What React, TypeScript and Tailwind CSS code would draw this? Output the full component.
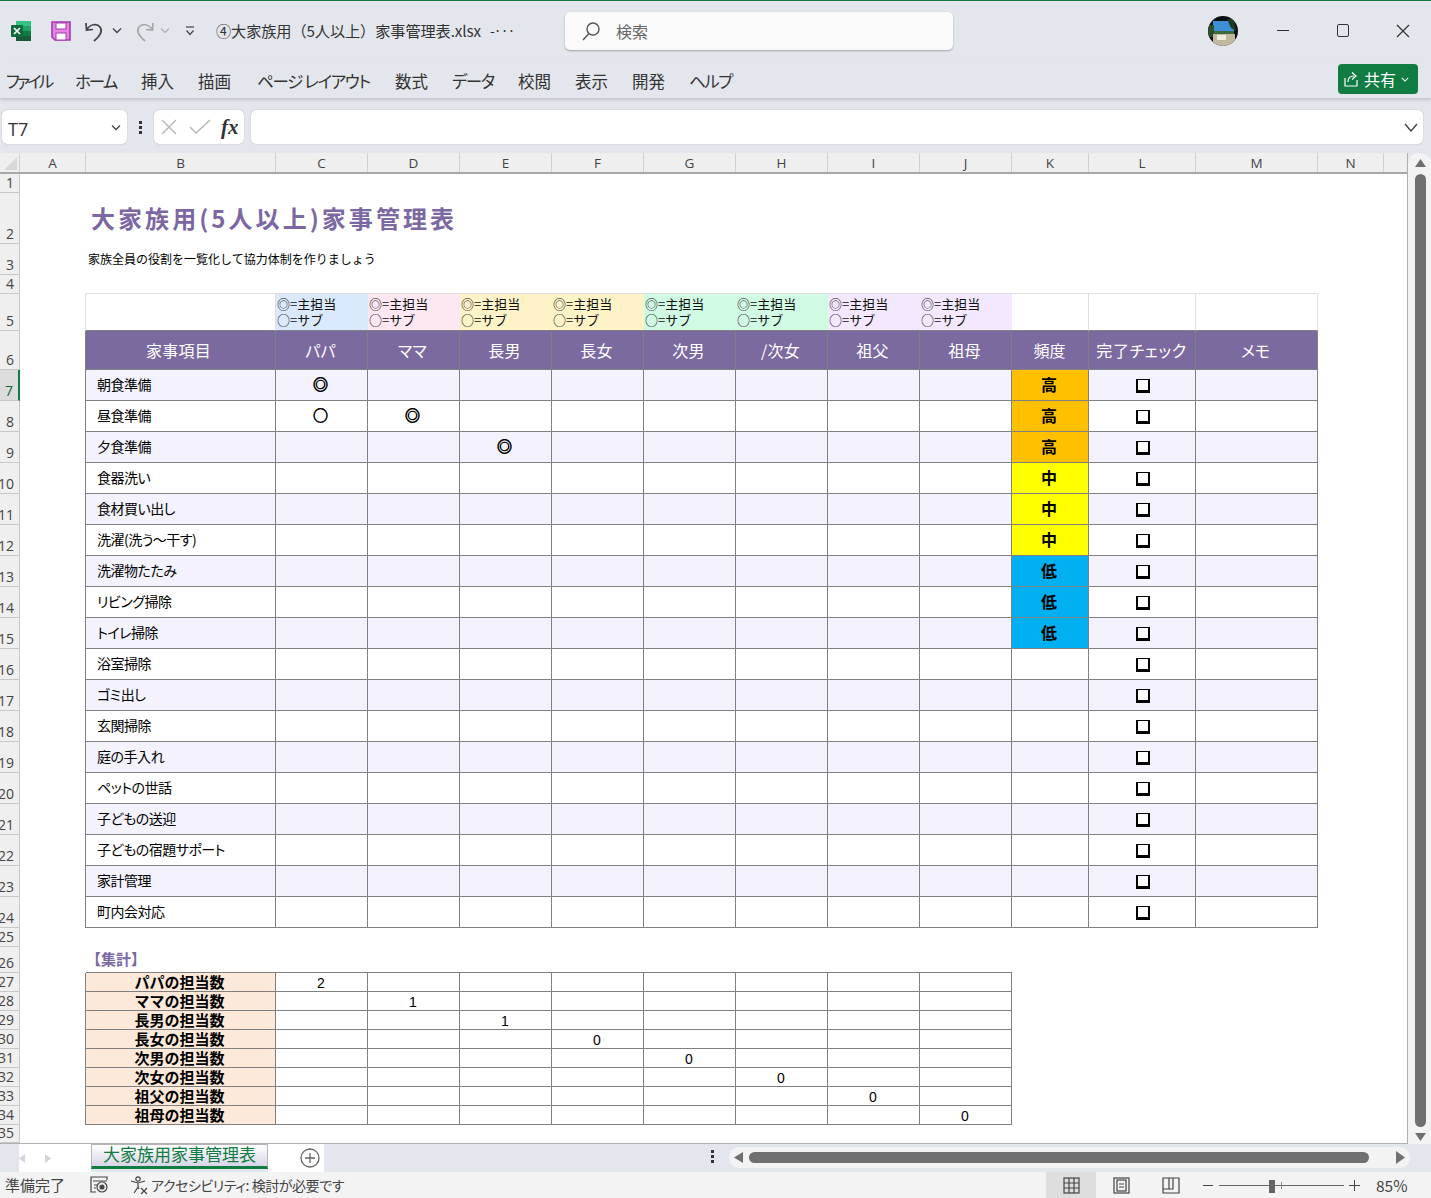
import React from "react";

const BORDER = "border-[#808080]";
const dataWidths = ["w-[92px]", "w-[92px]", "w-[92px]", "w-[92px]", "w-[92px]", "w-[92px]", "w-[92px]", "w-[92px]"];
const legendBg = ["bg-[#dbe9fd]", "bg-[#fce7f3]", "bg-[#fef3c7]", "bg-[#fef3c7]", "bg-[#d1fae5]", "bg-[#d1fae5]", "bg-[#f3e8ff]", "bg-[#f3e8ff]"];
const people = ["パパ", "ママ", "長男", "長女", "次男", "/次女", "祖父", "祖母"];
const chores = ["朝食準備", "昼食準備", "夕食準備", "食器洗い", "食材買い出し", "洗濯(洗う〜干す)", "洗濯物たたみ", "リビング掃除", "トイレ掃除", "浴室掃除", "ゴミ出し", "玄関掃除", "庭の手入れ", "ペットの世話", "子どもの送迎", "子どもの宿題サポート", "家計管理", "町内会対応"];
const marks: Record<string, string> = { "0-0": "◎", "1-0": "○", "1-1": "◎", "2-2": "◎" };
const freq = ["高", "高", "高", "中", "中", "中", "低", "低", "低"];
const freqBg = ["bg-[#ffc000]", "bg-[#ffc000]", "bg-[#ffc000]", "bg-[#ffff00]", "bg-[#ffff00]", "bg-[#ffff00]", "bg-[#00b0f0]", "bg-[#00b0f0]", "bg-[#00b0f0]"];
const summary = ["パパの担当数", "ママの担当数", "長男の担当数", "長女の担当数", "次男の担当数", "次女の担当数", "祖父の担当数", "祖母の担当数"];
const counts = ["2", "1", "1", "0", "0", "0", "0", "0"];
const columnHeads = [
  { l: "A", w: "w-[66px]" }, { l: "B", w: "w-[190px]" }, { l: "C", w: "w-[92px]" }, { l: "D", w: "w-[92px]" },
  { l: "E", w: "w-[92px]" }, { l: "F", w: "w-[92px]" }, { l: "G", w: "w-[92px]" }, { l: "H", w: "w-[92px]" },
  { l: "I", w: "w-[92px]" }, { l: "J", w: "w-[92px]" }, { l: "K", w: "w-[77px]" }, { l: "L", w: "w-[107px]" },
  { l: "M", w: "w-[122px]" }, { l: "N", w: "w-[66px]" },
];
const menu = [
  { t: "ファイル", w: "w-[46px] tracking-[-3px]" }, { t: "ホーム", w: "w-[43px] tracking-[-2px]" }, { t: "挿入", w: "w-[34px]" }, { t: "描画", w: "w-[36px]" },
  { t: "ページ レイアウト", w: "w-[115px] tracking-[-1.3px]" }, { t: "数式", w: "w-[34px]" }, { t: "データ", w: "w-[43px] tracking-[-1.5px]" }, { t: "校閲", w: "w-[34px]" },
  { t: "表示", w: "w-[34px]" }, { t: "開発", w: "w-[34px]" }, { t: "ヘルプ", w: "w-[43px] tracking-[-1.5px]" },
];

function Row({ n, h, sel, children }: { n: number; h: string; sel?: boolean; children?: React.ReactNode }) {
  return (
    <div className={`flex ${h}`}>
      <div className={sel
        ? "w-[20px] shrink-0 flex items-end justify-end pr-[5px] bg-[#dcdcdc] border-r-2 border-r-[#107c41] border-b border-b-[#c8c8c8] text-[14px] leading-[18px] text-[#0f6b39] font-['Open_Sans',sans-serif]"
        : "w-[20px] shrink-0 flex items-end justify-end pr-[5px] bg-[#efefef] border-r border-b border-[#c8c8c8] text-[14px] leading-[18px] text-[#444444] font-['Open_Sans',sans-serif]"}>
        {n}
      </div>
      {children}
    </div>
  );
}

function Cell({ className, children }: { className: string; children?: React.ReactNode }) {
  return <div className={`shrink-0 h-full flex items-center justify-center border-r border-b ${BORDER} ${className}`}>{children}</div>;
}

function ChoreRow({ i }: { i: number }) {
  const stripe = i % 2 === 0 ? "bg-[#f3f2fd]" : "bg-white";
  return (
    <Row n={7 + i} h="h-[31px]" sel={i === 0}>
      <div className={`w-[66px] shrink-0 border-r ${BORDER}`} />
      <Cell className={`w-[190px] !justify-start pl-[11px] pb-[1px] text-[14px] tracking-[-0.5px] text-black ${stripe}`}>{chores[i]}</Cell>
      {dataWidths.map((w, c) => (
        <Cell key={c} className={`${w} ${stripe} pr-[2px] pb-[1px] text-[15px] font-bold text-black [-webkit-text-stroke:0.6px_black]`}>{marks[`${i}-${c}`]}</Cell>
      ))}
      <Cell className={`w-[77px] pr-[2px] pb-[2px] text-[16px] font-bold text-black ${freqBg[i] ?? stripe}`}>{freq[i]}</Cell>
      <Cell className={`w-[107px] pl-[1px] ${stripe}`}>
        <span className="block w-[14px] h-[14px] mt-[1px] border-2 border-t-[1.5px] border-b-[3px] border-black bg-white" />
      </Cell>
      <Cell className={`w-[122px] ${stripe}`} />
    </Row>
  );
}

function Excel() {
  return (
    <svg width="22" height="22" viewBox="0 0 22 22">
      <rect x="6" y="1" width="15" height="5" fill="#33c481" />
      <rect x="6" y="6" width="15" height="5" fill="#21a366" />
      <rect x="6" y="11" width="15" height="5" fill="#107c41" />
      <rect x="6" y="16" width="15" height="5" fill="#185c37" />
      <rect x="1" y="5" width="12" height="12" rx="1" fill="#0f6b39" />
      <path d="M4 8 L10 14 M10 8 L4 14" stroke="#fff" strokeWidth="1.6" />
    </svg>
  );
}

function Save() {
  return (
    <svg width="20" height="20" viewBox="0 0 20 20">
      <path d="M1 1 H19 V19 H4 L1 16 Z" fill="#e884df" stroke="#a23ab0" strokeWidth="1.6" />
      <rect x="5" y="2" width="10" height="6" fill="#fff" stroke="#a23ab0" />
      <rect x="5" y="12" width="10" height="7" fill="#fff" stroke="#a23ab0" />
    </svg>
  );
}

function Chevron({ className, color = "#444444" }: { className?: string; color?: string }) {
  return (
    <svg width="10" height="7" viewBox="0 0 10 7" className={className}>
      <path d="M1 1.5 L5 5.5 L9 1.5" fill="none" stroke={color} strokeWidth="1.3" />
    </svg>
  );
}

function App() {
  return (
    <div className="relative w-[1431px] h-[1198px] overflow-hidden bg-[#e3e6ec] font-['Noto_Sans_CJK_JP',sans-serif] [font-feature-settings:'palt'] text-[#333333]">
      <div className="h-px bg-[#107c41]" />

      {/* title bar */}
      <div className="h-[59px] flex items-center relative">
        <div className="ml-[10px] w-[22px] mt-[1px]"><Excel /></div>
        <div className="ml-[19px] mt-[1px]"><Save /></div>
        <svg width="22" height="22" viewBox="0 0 22 22" className="ml-[13px]" fill="none" stroke="#444444" strokeWidth="1.7">
          <path d="M2 3 L2.5 10 L9 9.5" />
          <path d="M2.5 10 C6 4 13 3 16 7 C19 11 16 16 10 21" />
        </svg>
        <Chevron className="ml-[6px]" />
        <svg width="22" height="22" viewBox="0 0 22 22" className="ml-[11px]" fill="none" stroke="#a8a8a8" strokeWidth="1.7">
          <path d="M20 3 L19.5 10 L13 9.5" />
          <path d="M19.5 10 C16 4 9 3 6 7 C3 11 6 16 12 21" />
        </svg>
        <Chevron className="ml-[5px]" color="#b4b4b4" />
        <svg width="10" height="10" viewBox="0 0 10 10" className="ml-[15px]" fill="none" stroke="#444444" strokeWidth="1.2">
          <path d="M1 1 H9" />
          <path d="M1.5 4.5 L5 8.5 L8.5 4.5" />
        </svg>
        <span className="ml-[21px] w-[268px] whitespace-nowrap text-[15.2px] tracking-[-0.1px] text-[#333333] [font-feature-settings:normal]">④大家族用（5人以上）家事管理表.xlsx</span>
        <span className="ml-[6px] w-[26px] text-[14px] text-[#333333] whitespace-nowrap tracking-[-1px]">-···</span>
        <div className="ml-[49px] w-[388px] h-[38px] mt-[1px] rounded-[5px] bg-[#fafafa] shadow-[0_1px_2px_rgba(0,0,0,0.3)] flex items-center pl-[16px]">
          <svg width="20" height="20" viewBox="0 0 20 20" fill="none" stroke="#555555" strokeWidth="1.4">
            <circle cx="12" cy="8" r="6" />
            <path d="M8 12.5 L2 19" />
          </svg>
          <span className="ml-[15px] text-[16px] text-[#666666]">検索</span>
        </div>
        <svg width="30" height="30" viewBox="0 0 30 30" className="ml-[255px]">
          <defs><clipPath id="av"><circle cx="15" cy="15" r="15" /></clipPath></defs>
          <g clipPath="url(#av)">
            <rect width="30" height="30" fill="#0a0f14" />
            <rect x="5" y="5" width="21" height="12" fill="#3f8fd8" />
            <rect x="5" y="15" width="21" height="3" fill="#3d6a3a" />
            <rect x="0" y="9" width="6" height="12" fill="#2f4d2c" />
            <rect x="5" y="18" width="22" height="12" fill="#c2b89e" />
            <rect x="9" y="19" width="9" height="5" fill="#efebdf" />
            <path d="M19 3 L26 3 L28 15 L23 12 Z" fill="#1c3a24" />
          </g>
        </svg>
        <span className="ml-[39px] w-[12px] h-[1.5px] bg-[#333333]" />
        <span className="ml-[48px] w-[12px] h-[13px] rounded-[2px] border-[1.3px] border-[#333333]" />
        <svg width="14" height="14" viewBox="0 0 14 14" className="ml-[47px]" stroke="#333333" strokeWidth="1.2">
          <path d="M1 1 L13 13 M13 1 L1 13" />
        </svg>
      </div>

      {/* menu */}
      <div className="h-[38px] flex items-center pl-[6px] gap-[23px] shadow-[0_2px_3px_rgba(0,0,0,0.15)] relative">
        {menu.map((m) => (
          <span key={m.t} className={`${m.w} mt-[3px] shrink-0 whitespace-nowrap text-[16.5px] leading-[20px] text-[#333333]`}>{m.t}</span>
        ))}
        <div className="ml-auto mr-[13px] w-[80px] h-[30px] rounded-[4px] bg-[#107c41] flex items-center pl-[6px] text-white">
          <svg width="15" height="16" viewBox="0 0 15 16" fill="none" stroke="#ffffff" strokeWidth="1.2">
            <path d="M1 7 V15 H13 V9" />
            <path d="M4 11 C4 7 6 5 10 5 M8 1.5 L12 5 L8 8.5" />
          </svg>
          <span className="ml-[5px] text-[16px] leading-[20px]">共有</span>
          <Chevron className="ml-[5px] w-[8px]" color="#ffffff" />
        </div>
      </div>

      {/* formula bar */}
      <div className="h-[55px] flex items-start pt-[12px] pl-[2px]">
        <div className="w-[125px] h-[34px] rounded-[5px] bg-white shadow-[0_0_1px_rgba(0,0,0,0.4)] flex items-center justify-between pl-[6px] pr-[6px]">
          <span className="mt-[3px] text-[18px] leading-[20px] text-[#333333] font-['Open_Sans',sans-serif]">T7</span>
          <Chevron />
        </div>
        <div className="w-[27px] h-[34px] flex flex-col items-center justify-center gap-[2px]">
          <span className="w-[3px] h-[3px] bg-[#333333]" />
          <span className="w-[3px] h-[3px] bg-[#333333]" />
          <span className="w-[3px] h-[3px] bg-[#333333]" />
        </div>
        <div className="w-[90px] h-[34px] rounded-[5px] bg-white shadow-[0_0_1px_rgba(0,0,0,0.4)] flex items-center pl-[7px]">
          <svg width="16" height="16" viewBox="0 0 16 16" stroke="#b4b4b4" strokeWidth="1.4"><path d="M1 1 L15 15 M15 1 L1 15" /></svg>
          <svg width="22" height="16" viewBox="0 0 22 16" fill="none" stroke="#b4b4b4" strokeWidth="1.4" className="ml-[12px]"><path d="M1 8 L7 14 L21 1" /></svg>
          <span className="ml-[10px] text-[21px] leading-[20px] italic font-bold text-[#333333] font-['Liberation_Serif',serif]">fx</span>
        </div>
        <div className="ml-[7px] w-[1172px] h-[34px] rounded-[5px] bg-white shadow-[0_0_1px_rgba(0,0,0,0.4)] flex items-center justify-end pr-[5px]">
          <svg width="14" height="9" viewBox="0 0 14 9" fill="none" stroke="#444444" strokeWidth="1.4"><path d="M1 1 L7 8 L13 1" /></svg>
        </div>
      </div>

      {/* sheet */}
      <div className="flex h-[991px]">
        <div className="w-[1408px] shrink-0 bg-white border-r border-b border-[#b0b0b0]">
          <div className="flex h-[21px] bg-[#efefef] border-b-2 border-[#a8a8a8]">
            <div className="w-[20px] shrink-0 flex items-end justify-end pr-[2px] pb-[2px] border-r border-[#d0d0d0]">
              <svg width="13" height="13" viewBox="0 0 13 13"><path d="M13 0 V13 H0 Z" fill="#d8d8d8" /></svg>
            </div>
            {columnHeads.map((c) => (
              <div key={c.l} className={`${c.w} shrink-0 border-r border-[#d0d0d0] text-center text-[13.5px] leading-[20px] text-[#444444] font-['Open_Sans',sans-serif]`}>{c.l}</div>
            ))}
          </div>

          <Row n={1} h="h-[19px]" />
          <Row n={2} h="h-[51px]">
            <div className="pl-[71px] pb-[2px] flex items-center whitespace-nowrap text-[24px] font-bold tracking-[3.05px] text-[#7b68a3]">大家族用(5人以上)家事管理表</div>
          </Row>
          <Row n={3} h="h-[31px]">
            <div className="pl-[68px] pb-[2px] flex items-center whitespace-nowrap text-[12px] text-black [font-feature-settings:normal]">家族全員の役割を一覧化して協力体制を作りましょう</div>
          </Row>
          <Row n={4} h="h-[19px]">
            <div className="w-[65px] shrink-0" />
            <div className="w-[1233px] shrink-0 border-b border-[#e0e0e0] h-full" />
          </Row>
          <Row n={5} h="h-[37px]">
            <div className="w-[66px] shrink-0 border-r border-[#e0e0e0]" />
            <div className="w-[190px] shrink-0 border-r border-r-[#e0e0e0] border-b border-b-[#808080]" />
            {legendBg.map((bg, i) => (
              <div key={i} className={`w-[92px] shrink-0 pl-[1px] pt-[2px] border-b border-b-[#808080] ${bg} text-[13px] leading-[15.5px] whitespace-nowrap text-[#111111] [font-feature-settings:normal]`}>
                <div>◎=主担当</div>
                <div>○=サブ</div>
              </div>
            ))}
            <div className="w-[77px] shrink-0 border-r border-r-[#e0e0e0] border-b border-b-[#808080]" />
            <div className="w-[107px] shrink-0 border-r border-r-[#e0e0e0] border-b border-b-[#808080]" />
            <div className="w-[122px] shrink-0 border-r border-r-[#e0e0e0] border-b border-b-[#808080]" />
          </Row>
          <Row n={6} h="h-[39px]">
            <div className={`w-[66px] shrink-0 border-r ${BORDER}`} />
            <Cell className="w-[190px] bg-[#7b6aa0] text-[16px] tracking-[0.3px] text-white pr-[4px]">家事項目</Cell>
            {people.map((p, i) => (
              <Cell key={i} className={`${dataWidths[i]} bg-[#7b6aa0] text-[16px] tracking-[0.3px] text-white pr-[2px]`}>{p}</Cell>
            ))}
            <Cell className="w-[77px] bg-[#7b6aa0] text-[16px] text-white pr-[1px]">頻度</Cell>
            <Cell className="w-[107px] bg-[#7b6aa0] text-[16px] tracking-[0.6px] text-white whitespace-nowrap pr-[1px]">完了チェック</Cell>
            <Cell className="w-[122px] bg-[#7b6aa0] text-[16px] text-white pr-[2px]">メモ</Cell>
          </Row>
          {chores.map((_, i) => <ChoreRow key={i} i={i} />)}
          <Row n={25} h="h-[19px]" />
          <Row n={26} h="h-[26px]">
            <div className="w-[66px] shrink-0" />
            <div className={`w-[190px] shrink-0 h-full border-b ${BORDER} flex items-center whitespace-nowrap text-[15px] font-bold text-[#7b68a3] [font-feature-settings:normal]`}>【集計】</div>
            <div className={`w-[736px] shrink-0 h-full border-b ${BORDER}`} />
          </Row>
          {summary.map((s, i) => (
            <Row key={s} n={27 + i} h="h-[19px]">
              <div className={`w-[66px] shrink-0 border-r ${BORDER}`} />
              <Cell className="w-[190px] bg-[#fde9d9] pr-[2px] text-[15px] leading-[18px] font-bold text-black whitespace-nowrap [font-feature-settings:normal]">{s}</Cell>
              {dataWidths.map((w, c) => (
                <Cell key={c} className={`${w} text-[14px] leading-[18px] pt-[1px] pr-[1px] text-black font-['Liberation_Sans',sans-serif]`}>{c === i ? counts[i] : ""}</Cell>
              ))}
            </Row>
          ))}
          <Row n={35} h="h-[18px]" />
        </div>

        {/* vertical scrollbar */}
        <div className="w-[23px] shrink-0 bg-[#f3f3f3] rounded-t-[10px] flex flex-col items-center pt-[6px] pb-[3px] pl-[1px]">
          <svg width="11" height="8" viewBox="0 0 11 8"><path d="M5.5 0 L11 8 H0 Z" fill="#707070" /></svg>
          <div className="w-[11px] flex-1 mt-[7px] mb-[6px] rounded-[6px] bg-[#707070]" />
          <svg width="11" height="8" viewBox="0 0 11 8"><path d="M5.5 8 L11 0 H0 Z" fill="#707070" /></svg>
        </div>
      </div>

      {/* tabs */}
      <div className="h-[28px] flex">
        <div className="w-[19px] shrink-0" />
        <div className="w-[72px] h-full bg-white flex items-center">
          <svg width="6" height="9" viewBox="0 0 6 9"><path d="M6 0 V9 L0 4.5 Z" fill="#d4d4d4" /></svg>
          <svg width="6" height="9" viewBox="0 0 6 9" className="ml-[20px]"><path d="M0 0 V9 L6 4.5 Z" fill="#d4d4d4" /></svg>
        </div>
        <div className="w-[177px] h-[25px] shrink-0 border-x border-t border-[#b4b4b4] border-b-[3px] border-b-[#107c41] bg-gradient-to-b from-white to-[#d8d6e8] text-center text-[17px] leading-[18px] text-[#107c41] whitespace-nowrap [font-feature-settings:normal]">大家族用家事管理表</div>
        <div className="w-[56px] h-full bg-white flex items-center justify-center pl-[28px]">
          <svg width="20" height="20" viewBox="0 0 20 20" fill="none" stroke="#666666" strokeWidth="1.3">
            <circle cx="10" cy="10" r="9" />
            <path d="M5 10 H15 M10 5 V15" />
          </svg>
        </div>
        <div className="ml-[387px] w-[3px] flex flex-col items-center justify-center gap-[2px] h-[24px]">
          <span className="w-[3px] h-[3px] bg-[#333333]" />
          <span className="w-[3px] h-[3px] bg-[#333333]" />
          <span className="w-[3px] h-[3px] bg-[#333333]" />
        </div>
        <div className="ml-[15px] mt-[3px] w-[681px] h-[21px] rounded-[10px] bg-[#f3f3f3] flex items-center pl-[5px] pr-[4px]">
          <svg width="9" height="11" viewBox="0 0 9 11" className="shrink-0"><path d="M9 0 V11 L0 5.5 Z" fill="#707070" /></svg>
          <div className="ml-[6px] w-[620px] h-[11px] rounded-[6px] bg-[#707070]" />
          <svg width="9" height="13" viewBox="0 0 9 13" className="ml-[27px] shrink-0"><path d="M0 0 V13 L9 6.5 Z" fill="#707070" /></svg>
        </div>
      </div>

      {/* status bar */}
      <div className="h-[26px] bg-[#f3f3f3] flex items-center pl-[5px] text-[#444444]">
        <span className="w-[60px] text-[15px] leading-[20px] whitespace-nowrap [font-feature-settings:normal]">準備完了</span>
        <svg width="20" height="18" viewBox="0 0 20 18" className="ml-[24px]" fill="none" stroke="#444444" strokeWidth="1.2">
          <path d="M18 4 V1 H2 V16 H7" />
          <path d="M4 5 H18 M5 9 H8 M5 12 H7" />
          <circle cx="13" cy="11" r="5" />
          <circle cx="13" cy="11" r="2" fill="#444444" />
        </svg>
        <svg width="20" height="20" viewBox="0 0 20 20" className="ml-[20px]" fill="none" stroke="#444444" strokeWidth="1.2">
          <circle cx="9" cy="4" r="2.2" />
          <path d="M2 6 L9 8 L16 6 M9 8 V12 L5 18 M9 12 L10 14" />
          <path d="M12 13 L18 19 M18 13 L12 19" />
        </svg>
        <span className="ml-[2px] text-[14px] leading-[20px] whitespace-nowrap tracking-[-0.45px]">アクセシビリティ: 検討が必要です</span>
        <div className="ml-auto flex items-center h-full">
          <div className="w-[50px] h-full bg-[#dedede] flex items-center justify-center">
            <svg width="17" height="17" viewBox="0 0 17 17" fill="none" stroke="#444444" strokeWidth="1.2">
              <rect x="1" y="1" width="15" height="15" />
              <path d="M6 1 V16 M11 1 V16 M1 6 H16 M1 11 H16" />
            </svg>
          </div>
          <div className="w-[50px] flex justify-center">
            <svg width="17" height="17" viewBox="0 0 17 17" fill="none" stroke="#444444" strokeWidth="1.2">
              <rect x="1" y="1" width="15" height="15" />
              <rect x="4" y="3" width="9" height="11" />
              <path d="M6 7 H11 M6 10 H11" />
            </svg>
          </div>
          <div className="w-[50px] flex justify-center">
            <svg width="18" height="17" viewBox="0 0 18 17" fill="none" stroke="#444444" strokeWidth="1.2">
              <path d="M1 1 H17 V16 H1 Z" />
              <path d="M1 12 H11 V1 M7 1 V12" />
            </svg>
          </div>
          <span className="ml-[7px] w-[10px] h-px bg-[#444444]" />
          <div className="relative ml-[6px] w-[125px] h-[11px] flex items-center">
            <span className="w-full h-px bg-[#666666]" />
            <span className="absolute left-[50px] top-0 w-[6px] h-[13px] bg-[#666666]" />
            <span className="absolute left-[62px] top-[2px] w-px h-[7px] bg-[#888888]" />
          </div>
          <svg width="11" height="11" viewBox="0 0 11 11" className="ml-[5px]" stroke="#444444" strokeWidth="1"><path d="M0 5.5 H11 M5.5 0 V11" /></svg>
          <span className="ml-[16px] mr-[22px] w-[33px] text-[15.5px] leading-[20px] whitespace-nowrap">85%</span>
        </div>
      </div>
    </div>
  );
}

export default App;
